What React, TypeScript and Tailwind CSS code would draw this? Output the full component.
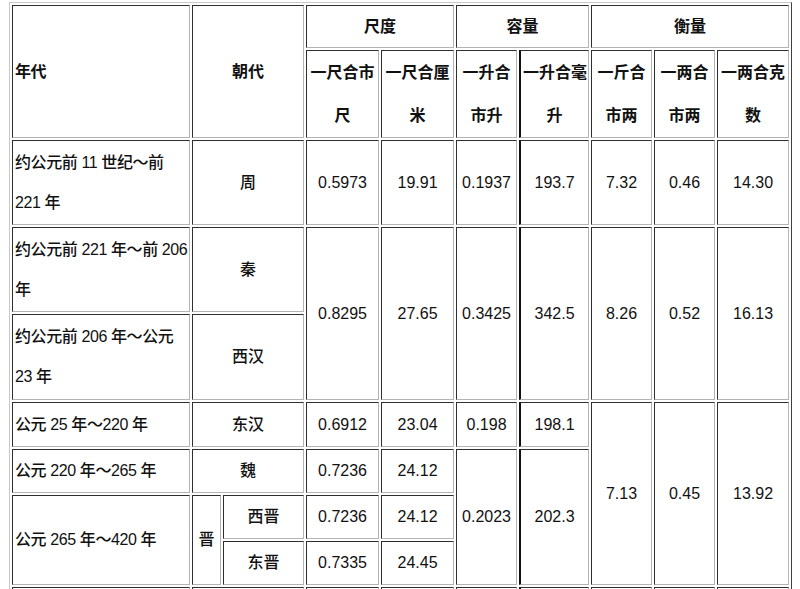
import React from 'react';

const td =
  'border border-t-[#2f2f2f] border-l-[#2f2f2f] border-r-[#b4b4b4] border-b-[#b4b4b4] px-[2px] py-0 align-middle text-center';
const tdLeft =
  'border border-t-[#2f2f2f] border-l-[#2f2f2f] border-r-[#b4b4b4] border-b-[#b4b4b4] pl-[2px] pr-0 py-0 align-middle text-left whitespace-nowrap tracking-[-0.4px]';
// the 容量 second column carries a heavier left rule in the picture
const tdHeavy =
  'border border-l-2 border-t-[#2f2f2f] border-l-[#111] border-r-[#b4b4b4] border-b-[#b4b4b4] px-[2px] py-0 align-middle text-center';

type Row = {
  era: React.ReactNode;
  h: string;
  cells: React.ReactNode;
};

export default function App() {
  const rows: Row[] = [
    {
      era: (
        <>
          约公元前 11 世纪～前
          <br />
          221 年
        </>
      ),
      h: 'h-[85px]',
      cells: (
        <>
          <td colSpan={2} className={td}>周</td>
          <td className={td}>0.5973</td>
          <td className={td}>19.91</td>
          <td className={td}>0.1937</td>
          <td className={tdHeavy}>193.7</td>
          <td className={td}>7.32</td>
          <td className={td}>0.46</td>
          <td className={td}>14.30</td>
        </>
      ),
    },
    {
      era: (
        <>
          约公元前 221 年～前 206
          <br />
          年
        </>
      ),
      h: 'h-[85px]',
      cells: (
        <>
          <td colSpan={2} className={td}>秦</td>
          <td rowSpan={2} className={td}>0.8295</td>
          <td rowSpan={2} className={td}>27.65</td>
          <td rowSpan={2} className={td}>0.3425</td>
          <td rowSpan={2} className={tdHeavy}>342.5</td>
          <td rowSpan={2} className={td}>8.26</td>
          <td rowSpan={2} className={td}>0.52</td>
          <td rowSpan={2} className={td}>16.13</td>
        </>
      ),
    },
    {
      era: (
        <>
          约公元前 206 年～公元
          <br />
          23 年
        </>
      ),
      h: 'h-[86px]',
      cells: <td colSpan={2} className={td}>西汉</td>,
    },
    {
      era: '公元 25 年～220 年',
      h: 'h-[45px]',
      cells: (
        <>
          <td colSpan={2} className={td}>东汉</td>
          <td className={td}>0.6912</td>
          <td className={td}>23.04</td>
          <td className={td}>0.198</td>
          <td className={tdHeavy}>198.1</td>
          <td rowSpan={4} className={td}>7.13</td>
          <td rowSpan={4} className={td}>0.45</td>
          <td rowSpan={4} className={td}>13.92</td>
        </>
      ),
    },
    {
      era: '公元 220 年～265 年',
      h: 'h-[44px]',
      cells: (
        <>
          <td colSpan={2} className={td}>魏</td>
          <td className={td}>0.7236</td>
          <td className={td}>24.12</td>
          <td rowSpan={3} className={td}>0.2023</td>
          <td rowSpan={3} className={tdHeavy}>202.3</td>
        </>
      ),
    },
  ];

  return (
    <div className="min-h-[589px] bg-white pl-[9px] pt-[2px] text-[16px] text-[#111] font-medium font-['Liberation_Sans','Noto_Sans_CJK_SC',sans-serif]">
      <table className="table-fixed w-[783px] border-separate border-spacing-[2px] border border-t-[#c8c8c8] border-l-[#c8c8c8] border-r-[#404040] border-b-[#404040]">
        <colgroup>
          <col className="w-[178px]" />
          <col className="w-[29px]" />
          <col className="w-[81px]" />
          <col className="w-[73px]" />
          <col className="w-[73px]" />
          <col className="w-[61px]" />
          <col className="w-[70px]" />
          <col className="w-[61px]" />
          <col className="w-[61px]" />
          <col className="w-[72px]" />
        </colgroup>
        <thead className="font-semibold">
          <tr className="h-[43px]">
            <td rowSpan={2} className={tdLeft}>年代</td>
            <td rowSpan={2} colSpan={2} className={td}>朝代</td>
            <td colSpan={2} className={td}>尺度</td>
            <td colSpan={2} className={td}>容量</td>
            <td colSpan={3} className={td}>衡量</td>
          </tr>
          <tr className="h-[87px] leading-[43px] whitespace-nowrap">
            <td className={td}>一尺合市<br />尺</td>
            <td className={td}>一尺合厘<br />米</td>
            <td className={td}>一升合<br />市升</td>
            <td className={tdHeavy}>一升合毫<br />升</td>
            <td className={td}>一斤合<br />市两</td>
            <td className={td}>一两合<br />市两</td>
            <td className={td}>一两合克<br />数</td>
          </tr>
        </thead>
        <tbody className="leading-[40px]">
          {rows.map((r, i) => (
            <tr key={i} className={r.h}>
              <td className={tdLeft}>{r.era}</td>
              {r.cells}
            </tr>
          ))}
          <tr className="h-[44px]">
            <td rowSpan={2} className={tdLeft}>公元 265 年～420 年</td>
            <td rowSpan={2} className={td}>晋</td>
            <td className={td}>西晋</td>
            <td className={td}>0.7236</td>
            <td className={td}>24.12</td>
          </tr>
          <tr className="h-[44px]">
            <td className={td}>东晋</td>
            <td className={td}>0.7335</td>
            <td className={td}>24.45</td>
          </tr>
          <tr className="h-[44px]">
            <td className={tdLeft}></td>
            <td colSpan={2} className={td}></td>
            <td className={td}></td>
            <td className={td}></td>
            <td className={td}></td>
            <td className={tdHeavy}></td>
            <td className={td}></td>
            <td className={td}></td>
            <td className={td}></td>
          </tr>
        </tbody>
      </table>
    </div>
  );
}
